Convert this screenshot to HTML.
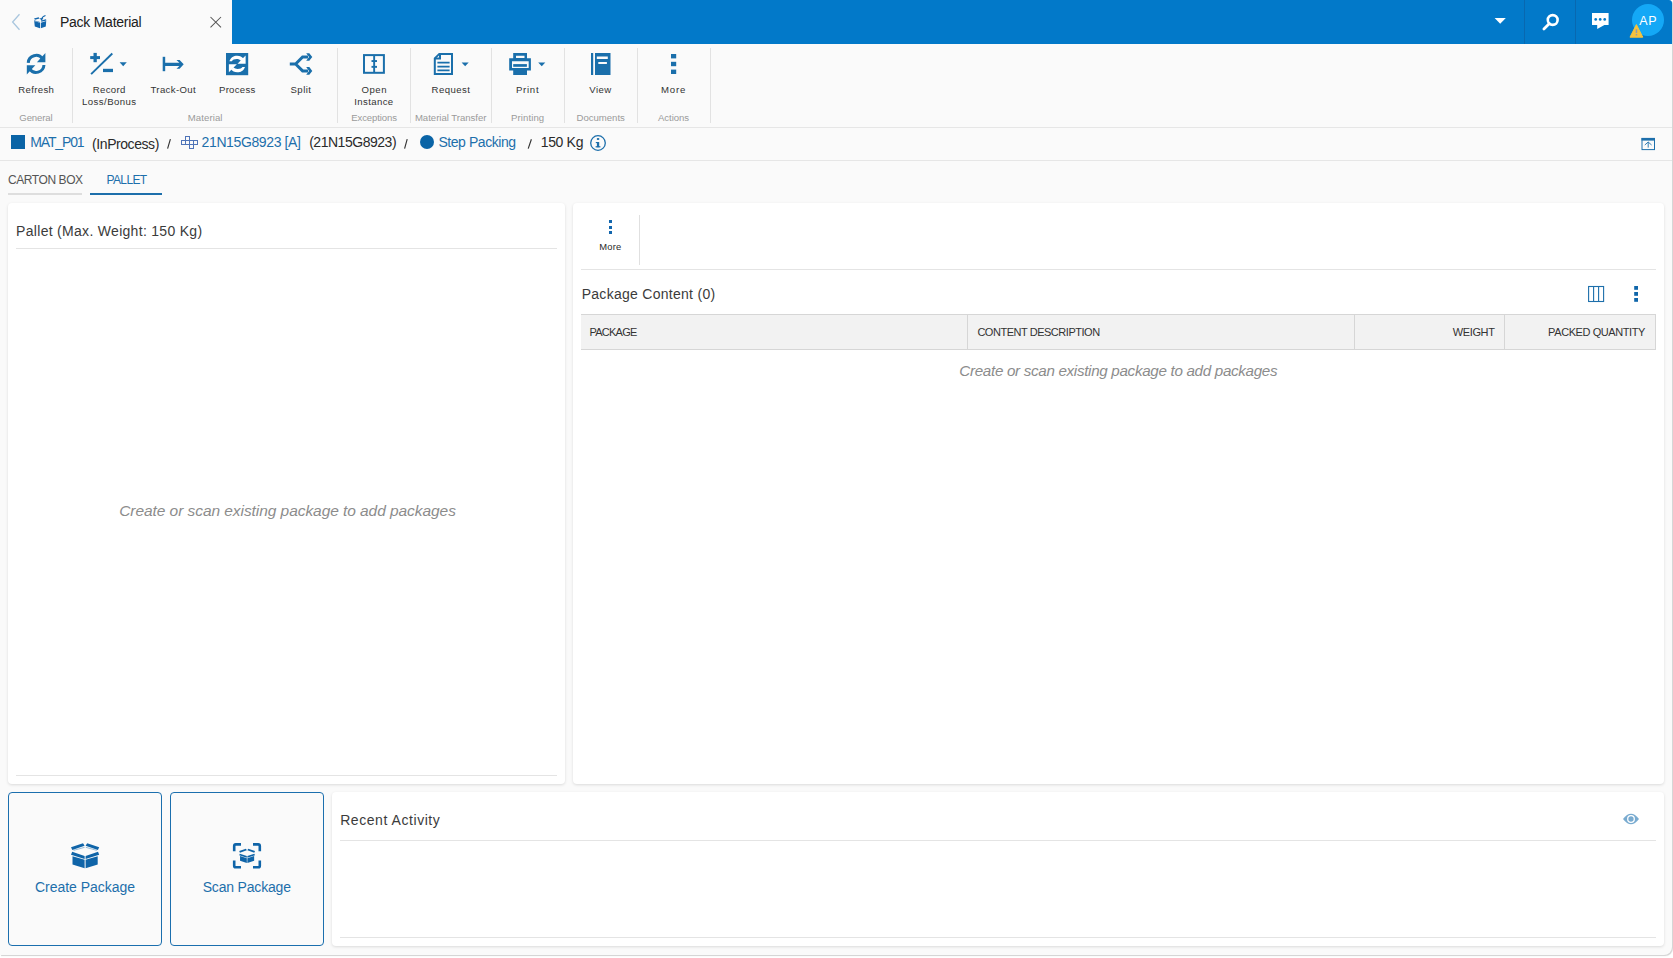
<!DOCTYPE html>
<html><head><meta charset="utf-8">
<style>
html,body{margin:0;padding:0;}
body{width:1673px;height:958px;overflow:hidden;background:#fff;position:relative;font-family:"Liberation Sans", sans-serif;}
.a{position:absolute;}
.t{position:absolute;white-space:nowrap;line-height:1;font-family:"Liberation Sans", sans-serif;}
.page{position:absolute;left:0;top:0;width:1672px;height:955px;background:#fafafa;border-radius:0 3px 8px 0;box-shadow:1px 1px 1px rgba(0,0,0,0.18);overflow:hidden;}
.hbar{position:absolute;left:232px;top:0;width:1440px;height:44px;background:#0279c9;border-radius:0 1.5px 0 0;}
.vsep{position:absolute;width:1px;background:#e2e2e2;}
.hsep{position:absolute;height:1px;background:#e4e4e4;}
.card{position:absolute;background:#fff;border-radius:4px;box-shadow:0 1px 3px rgba(0,0,0,0.13);}
svg{position:absolute;overflow:visible;}
.btn{position:absolute;box-sizing:border-box;border:1px solid #1b6fae;border-radius:4px;background:#fafafa;}
</style></head><body>
<div class="page">
  <!-- header -->
  <div class="hbar"></div>
  <svg style="left:0;top:0" width="1673" height="44" viewBox="0 0 1673 44">
    <!-- back chevron -->
    <polyline points="19.5,14.2 12.6,22 19.5,29.8" fill="none" stroke="#a9c6de" stroke-width="1.3"/>
    <!-- tab icon: box w/ arrow -->
    <g fill="#1266ad">
      <path d="M34.2,21 L40,22.8 L40,28.2 L34.8,26.6 Z"/>
      <path d="M40.8,22.8 L46.2,21 L45.8,26.6 L40.8,28.2 Z"/>
      <path d="M34,18.6 L38.6,17.2 L39.6,18.4 L35,19.8 Z"/>
      <path d="M41,20.5 L46,19.2 L46.4,20.4 L41.4,21.8 Z"/>
      <path d="M34,20.2 L40,22 L40,22.6 L34,20.8Z"/>
    </g>
    <path d="M45.5,15.5 Q42,16.5 41.6,19.5" fill="none" stroke="#1266ad" stroke-width="1.2"/>
    <path d="M39.6,18.2 L43.4,18.2 L41.5,20.6 Z" fill="#1266ad"/>
    <!-- close X -->
    <path d="M210.5,17 L221,27.3 M221,17 L210.5,27.3" stroke="#555" stroke-width="1.05" fill="none"/>
    <!-- caret -->
    <path d="M1494.6,18 L1505.8,18 L1500.2,23.8 Z" fill="#fff"/>
    <rect x="1524" y="0" width="1" height="44" fill="#0868b0"/>
    <rect x="1575" y="0" width="1" height="44" fill="#0868b0"/>
    <!-- search -->
    <circle cx="1552.7" cy="20" r="4.9" fill="none" stroke="#fff" stroke-width="2.6"/>
    <path d="M1549.4,23.4 L1543.9,28.9" stroke="#fff" stroke-width="2.8" stroke-linecap="round"/>
    <!-- chat -->
    <path d="M1592,13.1 L1608.6,13.1 L1608.6,24.9 L1604.4,24.9 L1597.2,29 L1597.2,24.9 L1592,24.9 Z" fill="#fff"/>
    <circle cx="1595.7" cy="19.4" r="1.35" fill="#0279c9"/>
    <circle cx="1600.2" cy="19.4" r="1.35" fill="#0279c9"/>
    <circle cx="1604.7" cy="19.4" r="1.35" fill="#0279c9"/>
    <!-- avatar -->
    <circle cx="1648" cy="20" r="16" fill="#14a8f6"/>
    <path d="M1636.4,24.6 L1642.8,37.2 L1630,37.2 Z" fill="#f6c33d" stroke="#f6c33d" stroke-width="1" stroke-linejoin="round"/>
    <rect x="1635.7" y="29.2" width="1.5" height="3.8" fill="#8f9bb0"/>
    <rect x="1635.7" y="34" width="1.5" height="1.5" fill="#8f9bb0"/>
  </svg>

  <!-- ribbon -->
  <div class="hsep" style="left:0;top:127px;width:1672px;background:#e6e6e6"></div>
  <div class="vsep" style="left:72px;top:48px;height:75px"></div>
  <div class="vsep" style="left:337px;top:48px;height:75px"></div>
  <div class="vsep" style="left:410px;top:48px;height:75px"></div>
  <div class="vsep" style="left:491px;top:48px;height:75px"></div>
  <div class="vsep" style="left:564px;top:48px;height:75px"></div>
  <div class="vsep" style="left:637px;top:48px;height:75px"></div>
  <div class="vsep" style="left:710px;top:48px;height:75px"></div>
  <svg style="left:0;top:0" width="800" height="130" viewBox="0 0 800 130">
    <g fill="#1a6fab">
      <!-- refresh -->
      <path d="M45.4,53 L45.4,62.3 L36.9,62.3 Z"/>
      <path d="M26.8,74.6 L26.8,65.3 L35.3,65.3 Z"/>
      <!-- record +/- -->
      <rect x="90.2" y="56.1" width="9.8" height="3"/>
      <rect x="93.5" y="52.9" width="3.3" height="9.3"/>
      <rect x="103" y="68.8" width="10" height="3.3"/>
      <path d="M119.6,62.3 L126.8,62.3 L123.2,66.3 Z"/>
      <!-- track-out -->
      <rect x="162.7" y="56.8" width="2.5" height="14.4"/>
      <path d="M165,62.8 L179.4,62.8 L176.5,60 L179.6,60 L183.7,64.35 L179.6,68.7 L176.5,68.7 L179.4,65.9 L165,65.9 Z"/>
      <!-- split arrowheads -->
      <path d="M306.2,53.2 L309.3,53.2 L312.3,56.9 L309.3,60.7 L306.2,60.7 L309,56.9 Z"/>
      <path d="M306.2,67.1 L309.3,67.1 L312.3,70.9 L309.3,74.7 L306.2,74.7 L309,70.9 Z"/>
      <!-- open instance -->
      <rect x="373.2" y="55" width="1.9" height="17.5"/>
      <rect x="371.5" y="60.1" width="5.5" height="1.9"/>
      <rect x="371.5" y="65.9" width="5.5" height="1.9"/>
      <!-- process -->
      <rect x="226" y="53" width="22.2" height="22.2"/>
      <!-- view -->
      <rect x="591" y="53" width="2.2" height="22"/>
      <path d="M595,53 L610.5,53 L610.5,75 L595,75 Z M596.8,56.6 L596.8,59 L607.8,59 L607.8,56.6 Z M598.3,62 L598.3,64.1 L606.9,64.1 L606.9,62 Z" fill-rule="evenodd"/>
      <!-- more -->
      <rect x="671" y="54" width="5.2" height="4.4"/>
      <rect x="671" y="61.8" width="5.2" height="4.4"/>
      <rect x="671" y="69.6" width="5.2" height="4.4"/>
      <!-- carets -->
      <path d="M461.6,62.4 L468.7,62.4 L465.15,66.3 Z"/>
      <path d="M538.2,62.4 L545.3,62.4 L541.75,66.3 Z"/>
      <!-- print -->
      <path d="M513.2,53 L527,53 L527,58.3 L530.9,58.3 L530.9,70.5 L527,70.5 L527,74.9 L513.2,74.9 L513.2,70.5 L509.2,70.5 L509.2,58.3 L513.2,58.3 Z M516,55.7 L516,58.1 L524.5,58.1 L524.5,55.7 Z M512,61.2 L512,68 L528.7,68 L528.7,61.2 Z" fill-rule="evenodd"/>
      <rect x="513.2" y="64.1" width="13.7" height="2.7"/>
    </g>
    <g fill="none" stroke="#1a6fab">
      <path d="M28.25,62.8 A7.85,7.85 0 0 1 42.6,58.9" stroke-width="3"/>
      <path d="M43.95,65 A7.85,7.85 0 0 1 29.6,68.9" stroke-width="3"/>
      <path d="M91.1,74.1 L112.3,53.5" stroke-width="1.9"/>
      <!-- split -->
      <path d="M289.8,64 L295.6,64 L302.6,56.9 L308,56.9 M295.6,64 L302.6,70.9 L308,70.9" stroke-width="3" stroke-linejoin="miter"/>
      <!-- open instance -->
      <rect x="364" y="55.1" width="19.9" height="17.7" stroke-width="2"/>
      <!-- request doc -->
      <path d="M439.3,53.9 L452,53.9 L452,73.9 L434.8,73.9 L434.8,58.4 Z" stroke-width="2" stroke-linejoin="miter"/>
      <path d="M434.8,58.6 L440,58.6 L440,53.9" stroke-width="2"/>
      <path d="M437.4,62.7 L449.6,62.7 M437.4,66.6 L449.6,66.6 M437.4,70.4 L449.6,70.4" stroke-width="1.8"/>
    </g>
    <!-- process inner refresh -->
    <g fill="#fff">
      <path d="M229.4,61.3 C230.8,57.2 234,55.7 237.2,55.8 C240,55.9 242,57 243.4,58.6 L241,60.8 C239.8,59.6 238.4,59.1 236.8,59.1 C234.4,59.1 232.6,60 231.9,61.3 Z"/>
      <path d="M245.6,55.6 L245.6,63.7 L237.5,63.7 Z"/>
      <path d="M245,67 C243.6,71 240.4,72.4 237.2,72.3 C234.4,72.2 232.4,71.1 231,69.5 L233.4,67.3 C234.6,68.5 236,69 237.6,69 C240,69 241.8,68.1 242.5,67 Z"/>
      <path d="M228.9,72.2 L228.9,64.3 L236.9,64.3 Z"/>
    </g>
  </svg>

  <!-- breadcrumb -->
  <div class="hsep" style="left:0;top:160px;width:1672px;background:#e6e6e6"></div>
  <div class="a" style="left:11px;top:135px;width:14px;height:14px;background:#0a64a6"></div>
  <div class="a" style="left:419.5px;top:135px;width:14px;height:14px;border-radius:50%;background:#0a64a6"></div>
  <svg style="left:0;top:125px" width="1673" height="35" viewBox="0 125 1673 35">
    <path d="M167.6,148.6 L170.4,139.2 M404.6,148.6 L407.2,139.2 M528.2,148.6 L531.4,139.2" stroke="#333" stroke-width="1.15" fill="none"/>
    <!-- grid icon -->
    <g fill="none" stroke="#4f74b8" stroke-width="1">
      <rect x="185.5" y="136.5" width="4" height="4"/>
      <rect x="181.5" y="140.5" width="16" height="4"/>
      <path d="M185.5,140.5 L185.5,144.5 M189.5,140.5 L189.5,144.5 M193.5,140.5 L193.5,144.5"/>
      <rect x="189.5" y="144.5" width="4" height="4"/>
    </g>
    <!-- info -->
    <circle cx="598" cy="143" r="7.3" fill="none" stroke="#1d6fab" stroke-width="1.3"/>
    <rect x="596.9" y="142" width="2.3" height="5.2" fill="#1d6fab"/>
    <rect x="595.6" y="146.2" width="4.8" height="1.2" fill="#1d6fab"/>
    <rect x="595.8" y="142" width="1.6" height="1.1" fill="#1d6fab"/>
    <rect x="596.9" y="138.1" width="2.3" height="1.8" fill="#1d6fab"/>
    <!-- restore icon -->
    <rect x="1642" y="138.4" width="12.5" height="11.2" fill="none" stroke="#1d6fab" stroke-width="1"/>
    <rect x="1641.5" y="138" width="13.5" height="2.6" fill="#1d6fab"/>
    <path d="M1648.2,147.6 L1648.2,142 M1644.8,145 L1648.2,142 L1651.6,145" fill="none" stroke="#1d6fab" stroke-width="0.9"/>
  </svg>

  <!-- tabs -->
  <div class="a" style="left:8px;top:193px;width:74px;height:2px;background:#dedede"></div>
  <div class="a" style="left:90px;top:193px;width:72px;height:2px;background:#1d6fab"></div>

  <!-- left card -->
  <div class="card" style="left:8px;top:203px;width:557px;height:581px"></div>
  <div class="hsep" style="left:16px;top:248px;width:541px"></div>
  <div class="hsep" style="left:16px;top:775px;width:541px"></div>

  <!-- right card -->
  <div class="card" style="left:573px;top:203px;width:1091px;height:581px"></div>
  <div class="a" style="left:608.6px;top:220px;width:3.6px;height:3.2px;background:#1266ad"></div>
  <div class="a" style="left:608.6px;top:225.5px;width:3.6px;height:3.2px;background:#1266ad"></div>
  <div class="a" style="left:608.6px;top:231px;width:3.6px;height:3.2px;background:#1266ad"></div>
  <div class="vsep" style="left:639px;top:215px;height:50px;background:#e0e0e0"></div>
  <div class="hsep" style="left:581px;top:269px;width:1075px"></div>
  <svg style="left:1580px;top:280px" width="70" height="30" viewBox="1580 280 70 30">
    <rect x="1588.6" y="286.5" width="15" height="15" fill="none" stroke="#1d6fab" stroke-width="1.1"/>
    <path d="M1593.6,286.5 L1593.6,301.5 M1598.6,286.5 L1598.6,301.5" stroke="#1d6fab" stroke-width="1.1"/>
    <rect x="1634.2" y="286" width="3.8" height="3.8" fill="#0f66aa"/>
    <rect x="1634.2" y="292" width="3.8" height="3.8" fill="#0f66aa"/>
    <rect x="1634.2" y="298" width="3.8" height="3.8" fill="#0f66aa"/>
  </svg>
  <div class="a" style="left:581px;top:314px;width:1075px;height:36px;box-sizing:border-box;border-top:1px solid #d6d6d6;border-bottom:1px solid #d6d6d6;border-right:1px solid #d6d6d6;background:#f2f2f2"></div>
  <div class="vsep" style="left:967px;top:315px;height:34px;background:#d6d6d6"></div>
  <div class="vsep" style="left:1354px;top:315px;height:34px;background:#d6d6d6"></div>
  <div class="vsep" style="left:1504px;top:315px;height:34px;background:#d6d6d6"></div>

  <!-- bottom -->
  <div class="btn" style="left:8px;top:792px;width:154px;height:154px"></div>
  <div class="btn" style="left:170px;top:792px;width:154px;height:154px"></div>
  <div class="card" style="left:332px;top:792px;width:1332px;height:154px"></div>
  <div class="hsep" style="left:340px;top:840px;width:1316px"></div>
  <div class="hsep" style="left:340px;top:937px;width:1316px"></div>
  <svg style="left:0;top:800px" width="1673" height="80" viewBox="0 800 1673 80">
    <!-- create package box -->
    <g fill="#0f64a8">
      <path d="M71,847.2 L83,843.2 L84.6,845.8 L72.3,850 Z"/>
      <path d="M99.2,847.2 L87.2,843.2 L85.6,845.8 L97.9,850 Z"/>
      <path d="M72.2,851.8 L84.6,856 L84.6,859 L71,854.8 Z"/>
      <path d="M98,851.8 L85.6,856 L85.6,859 L99.2,854.8 Z"/>
      <path d="M72.5,856.2 L84.6,859.8 L84.6,868.3 L72.5,864.5 Z"/>
      <path d="M97.7,856.2 L85.6,859.8 L85.6,868.3 L97.7,864.5 Z"/>
    </g>
    <path d="M73.6,850.4 L84.6,847.3 M85.8,847.3 L96.8,850.4" stroke="#0f64a8" stroke-width="0.7" opacity="0.6" fill="none"/>
    <!-- scan package -->
    <g fill="none" stroke="#0f64a8" stroke-width="2.6">
      <path d="M241,844.4 L235.8,844.4 Q234.2,844.4 234.2,846 L234.2,851.2"/>
      <path d="M253,844.4 L258.2,844.4 Q259.8,844.4 259.8,846 L259.8,851.2"/>
      <path d="M241,867.3 L235.8,867.3 Q234.2,867.3 234.2,865.7 L234.2,860.5"/>
      <path d="M253,867.3 L258.2,867.3 Q259.8,867.3 259.8,865.7 L259.8,860.5"/>
    </g>
    <g transform="translate(239.2,849) scale(0.56) translate(-71,-843.5)" fill="#0f64a8">
      <path d="M71,847.2 L83,843.2 L84.6,845.8 L72.3,850 Z"/>
      <path d="M99.2,847.2 L87.2,843.2 L85.6,845.8 L97.9,850 Z"/>
      <path d="M72.2,851.8 L84.6,856 L84.6,859 L71,854.8 Z"/>
      <path d="M98,851.8 L85.6,856 L85.6,859 L99.2,854.8 Z"/>
      <path d="M72.5,856.2 L84.6,859.8 L84.6,868.3 L72.5,864.5 Z"/>
      <path d="M97.7,856.2 L85.6,859.8 L85.6,868.3 L97.7,864.5 Z"/>
    </g>
    <!-- eye -->
    <path d="M1623,819 Q1631,808.5 1639,819 Q1631,829.5 1623,819 Z" fill="#79abd0"/>
    <circle cx="1631" cy="819" r="3.3" fill="none" stroke="#fff" stroke-width="1.3"/>
    <circle cx="1631" cy="819" r="1.9" fill="#79abd0"/>
  </svg>
</div>
<div id="t0" class="t" style="left:60.00px;top:15.15px;font-size:14.00px;color:#202020;letter-spacing:-0.262px;">Pack Material</div>
<div id="t1" class="t" style="left:1639.30px;top:14.72px;font-size:12.50px;color:#fff;letter-spacing:0.506px;">AP</div>
<div id="t2" class="t" style="left:18.30px;top:85.27px;font-size:9.60px;color:#333;letter-spacing:0.344px;">Refresh</div>
<div id="t3" class="t" style="left:92.70px;top:85.27px;font-size:9.60px;color:#333;letter-spacing:0.344px;">Record</div>
<div id="t4" class="t" style="left:82.10px;top:97.17px;font-size:9.60px;color:#333;letter-spacing:0.426px;">Loss/Bonus</div>
<div id="t5" class="t" style="left:150.50px;top:85.27px;font-size:9.60px;color:#333;letter-spacing:0.356px;">Track-Out</div>
<div id="t6" class="t" style="left:219.00px;top:85.27px;font-size:9.60px;color:#333;letter-spacing:0.263px;">Process</div>
<div id="t7" class="t" style="left:290.50px;top:85.27px;font-size:9.60px;color:#333;letter-spacing:0.466px;">Split</div>
<div id="t8" class="t" style="left:361.40px;top:85.27px;font-size:9.60px;color:#333;letter-spacing:0.579px;">Open</div>
<div id="t9" class="t" style="left:354.20px;top:97.17px;font-size:9.60px;color:#333;letter-spacing:0.390px;">Instance</div>
<div id="t10" class="t" style="left:431.50px;top:85.27px;font-size:9.60px;color:#333;letter-spacing:0.467px;">Request</div>
<div id="t11" class="t" style="left:516.00px;top:85.27px;font-size:9.60px;color:#333;letter-spacing:0.713px;">Print</div>
<div id="t12" class="t" style="left:589.30px;top:85.27px;font-size:9.60px;color:#333;letter-spacing:0.444px;">View</div>
<div id="t13" class="t" style="left:661.10px;top:85.27px;font-size:9.60px;color:#333;letter-spacing:0.760px;">More</div>
<div id="t14" class="t" style="left:19.30px;top:112.87px;font-size:9.60px;color:#9a9a9a;letter-spacing:-0.134px;">General</div>
<div id="t15" class="t" style="left:187.80px;top:112.87px;font-size:9.60px;color:#9a9a9a;letter-spacing:0.072px;">Material</div>
<div id="t16" class="t" style="left:351.30px;top:112.87px;font-size:9.60px;color:#9a9a9a;letter-spacing:-0.144px;">Exceptions</div>
<div id="t17" class="t" style="left:414.90px;top:112.87px;font-size:9.60px;color:#9a9a9a;letter-spacing:-0.023px;">Material Transfer</div>
<div id="t18" class="t" style="left:511.00px;top:112.87px;font-size:9.60px;color:#9a9a9a;letter-spacing:0.096px;">Printing</div>
<div id="t19" class="t" style="left:576.50px;top:112.87px;font-size:9.60px;color:#9a9a9a;letter-spacing:-0.026px;">Documents</div>
<div id="t20" class="t" style="left:658.00px;top:112.87px;font-size:9.60px;color:#9a9a9a;letter-spacing:-0.053px;">Actions</div>
<div id="t21" class="t" style="left:30.30px;top:135.45px;font-size:14.00px;color:#1d6fab;letter-spacing:-1.146px;">MAT_P01</div>
<div id="t22" class="t" style="left:92.10px;top:137.45px;font-size:14.00px;color:#2a2a2a;letter-spacing:-0.434px;">(InProcess)</div>
<div id="t23" class="t" style="left:201.60px;top:135.45px;font-size:14.00px;color:#1d6fab;letter-spacing:-0.385px;">21N15G8923 [A]</div>
<div id="t24" class="t" style="left:309.20px;top:135.45px;font-size:14.00px;color:#2a2a2a;letter-spacing:-0.477px;">(21N15G8923)</div>
<div id="t25" class="t" style="left:438.40px;top:135.45px;font-size:14.00px;color:#1d6fab;letter-spacing:-0.433px;">Step Packing</div>
<div id="t26" class="t" style="left:540.70px;top:135.45px;font-size:14.00px;color:#2a2a2a;letter-spacing:-0.329px;">150 Kg</div>
<div id="t27" class="t" style="left:7.90px;top:173.84px;font-size:12.00px;color:#555;letter-spacing:-0.412px;">CARTON BOX</div>
<div id="t28" class="t" style="left:106.50px;top:173.84px;font-size:12.00px;color:#1d6fab;letter-spacing:-0.635px;">PALLET</div>
<div id="t29" class="t" style="left:16.10px;top:223.85px;font-size:14.00px;color:#3b3b3b;letter-spacing:0.299px;">Pallet (Max. Weight: 150 Kg)</div>
<div id="t30" class="t" style="left:119.20px;top:503.38px;font-size:15.50px;color:#8c8c8c;letter-spacing:-0.060px;font-style:italic;">Create or scan existing package to add packages</div>
<div id="t31" class="t" style="left:599.30px;top:241.94px;font-size:9.40px;color:#2a2a2a;letter-spacing:0.210px;">More</div>
<div id="t32" class="t" style="left:581.70px;top:286.95px;font-size:14.00px;color:#3b3b3b;letter-spacing:0.279px;">Package Content (0)</div>
<div id="t33" class="t" style="left:589.50px;top:327.49px;font-size:11.00px;color:#333;letter-spacing:-0.768px;">PACKAGE</div>
<div id="t34" class="t" style="left:977.40px;top:327.49px;font-size:11.00px;color:#333;letter-spacing:-0.469px;">CONTENT DESCRIPTION</div>
<div id="t35" class="t" style="left:1452.80px;top:327.49px;font-size:11.00px;color:#333;letter-spacing:-0.383px;">WEIGHT</div>
<div id="t36" class="t" style="left:1548.10px;top:327.49px;font-size:11.00px;color:#333;letter-spacing:-0.413px;">PACKED QUANTITY</div>
<div id="t37" class="t" style="left:959.30px;top:363.03px;font-size:15.20px;color:#8c8c8c;letter-spacing:-0.312px;font-style:italic;">Create or scan existing package to add packages</div>
<div id="t38" class="t" style="left:34.90px;top:879.95px;font-size:14.00px;color:#1d6fab;letter-spacing:-0.015px;">Create Package</div>
<div id="t39" class="t" style="left:202.70px;top:879.95px;font-size:14.00px;color:#1d6fab;letter-spacing:-0.183px;">Scan Package</div>
<div id="t40" class="t" style="left:340.20px;top:813.15px;font-size:14.00px;color:#3b3b3b;letter-spacing:0.558px;">Recent Activity</div>
</body></html>
